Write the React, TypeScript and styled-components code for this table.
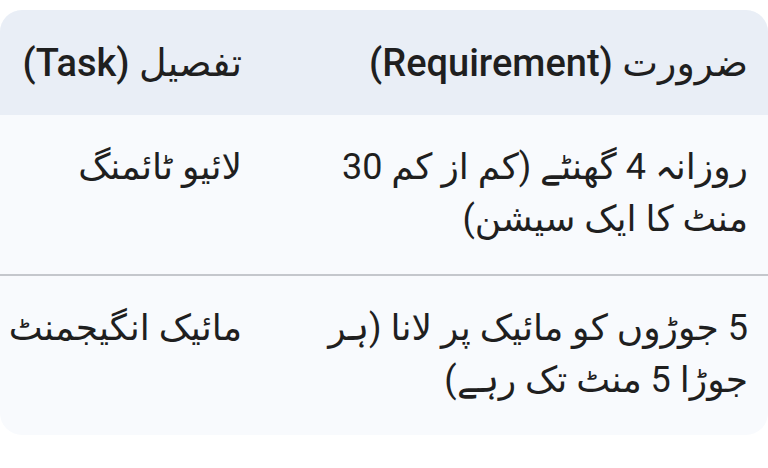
import { FC } from "react";
import styled, { createGlobalStyle } from "styled-components";

interface Row {
  requirement: string;
  task: string;
}

const rows: Row[] = [
  { requirement: "روزانہ 4 گھنٹے (کم از کم 30 منٹ کا ایک سیشن)", task: "لائیو ٹائمنگ" },
  { requirement: "5 جوڑوں کو مائیک پر لانا (ہر جوڑا 5 منٹ تک رہے)", task: "مائیک انگیجمنٹ" },
];

const App: FC = () => {
  return (
    <>
      <GlobalStyle />
      <Page>
        <Card>
          <Table dir="rtl">
            <thead>
              <HeadRow>
                <HeadCell>
                  ضرورت <Latin>(Requirement)</Latin>
                </HeadCell>
                <HeadCell $narrow>
                  تفصیل <Latin>(Task)</Latin>
                </HeadCell>
              </HeadRow>
            </thead>
            <tbody>
              {rows.map((row, index) => (
                <BodyRow key={index} $last={index === rows.length - 1}>
                  <Cell>{row.requirement}</Cell>
                  <Cell $narrow>{row.task}</Cell>
                </BodyRow>
              ))}
            </tbody>
          </Table>
        </Card>
      </Page>
    </>
  );
};

export default App;

const GlobalStyle = createGlobalStyle`
  html, body {
    margin: 0;
    padding: 0;
    background: #ffffff;
  }
  body {
    font-family: "Roboto", "DejaVu Sans", sans-serif;
    color: #1f1f1f;
  }
`;

const Page = styled.div`
  width: 768px;
  height: 468px;
  padding-top: 10px;
  box-sizing: border-box;
`;

const Card = styled.div`
  width: 768px;
  border-radius: 22px;
  overflow: hidden;
  background: #f8fafd;
`;

const Table = styled.table`
  width: 100%;
  border-collapse: collapse;
  table-layout: fixed;
`;

const HeadRow = styled.tr`
  background: #e9eef6;
  height: 105px;
`;

const HeadCell = styled.th<{ $narrow?: boolean }>`
  box-sizing: border-box;
  width: ${(p) => (p.$narrow ? "262px" : "auto")};
  padding: 0 20px;
  text-align: right;
  font-size: 38px;
  font-weight: 400;
  vertical-align: middle;
  white-space: nowrap;
`;

const Latin = styled.span`
  font-weight: 500;
`;

const BodyRow = styled.tr<{ $last?: boolean }>`
  border-bottom: ${(p) => (p.$last ? "none" : "2px solid #c4c7cc")};
`;

const Cell = styled.td<{ $narrow?: boolean }>`
  box-sizing: border-box;
  width: ${(p) => (p.$narrow ? "262px" : "auto")};
  padding: 26px 20px 29px ${(p) => (p.$narrow ? "6px" : "20px")};
  text-align: right;
  vertical-align: top;
  font-size: 36px;
  line-height: 52px;
  white-space: ${(p) => (p.$narrow ? "nowrap" : "normal")};
`;
